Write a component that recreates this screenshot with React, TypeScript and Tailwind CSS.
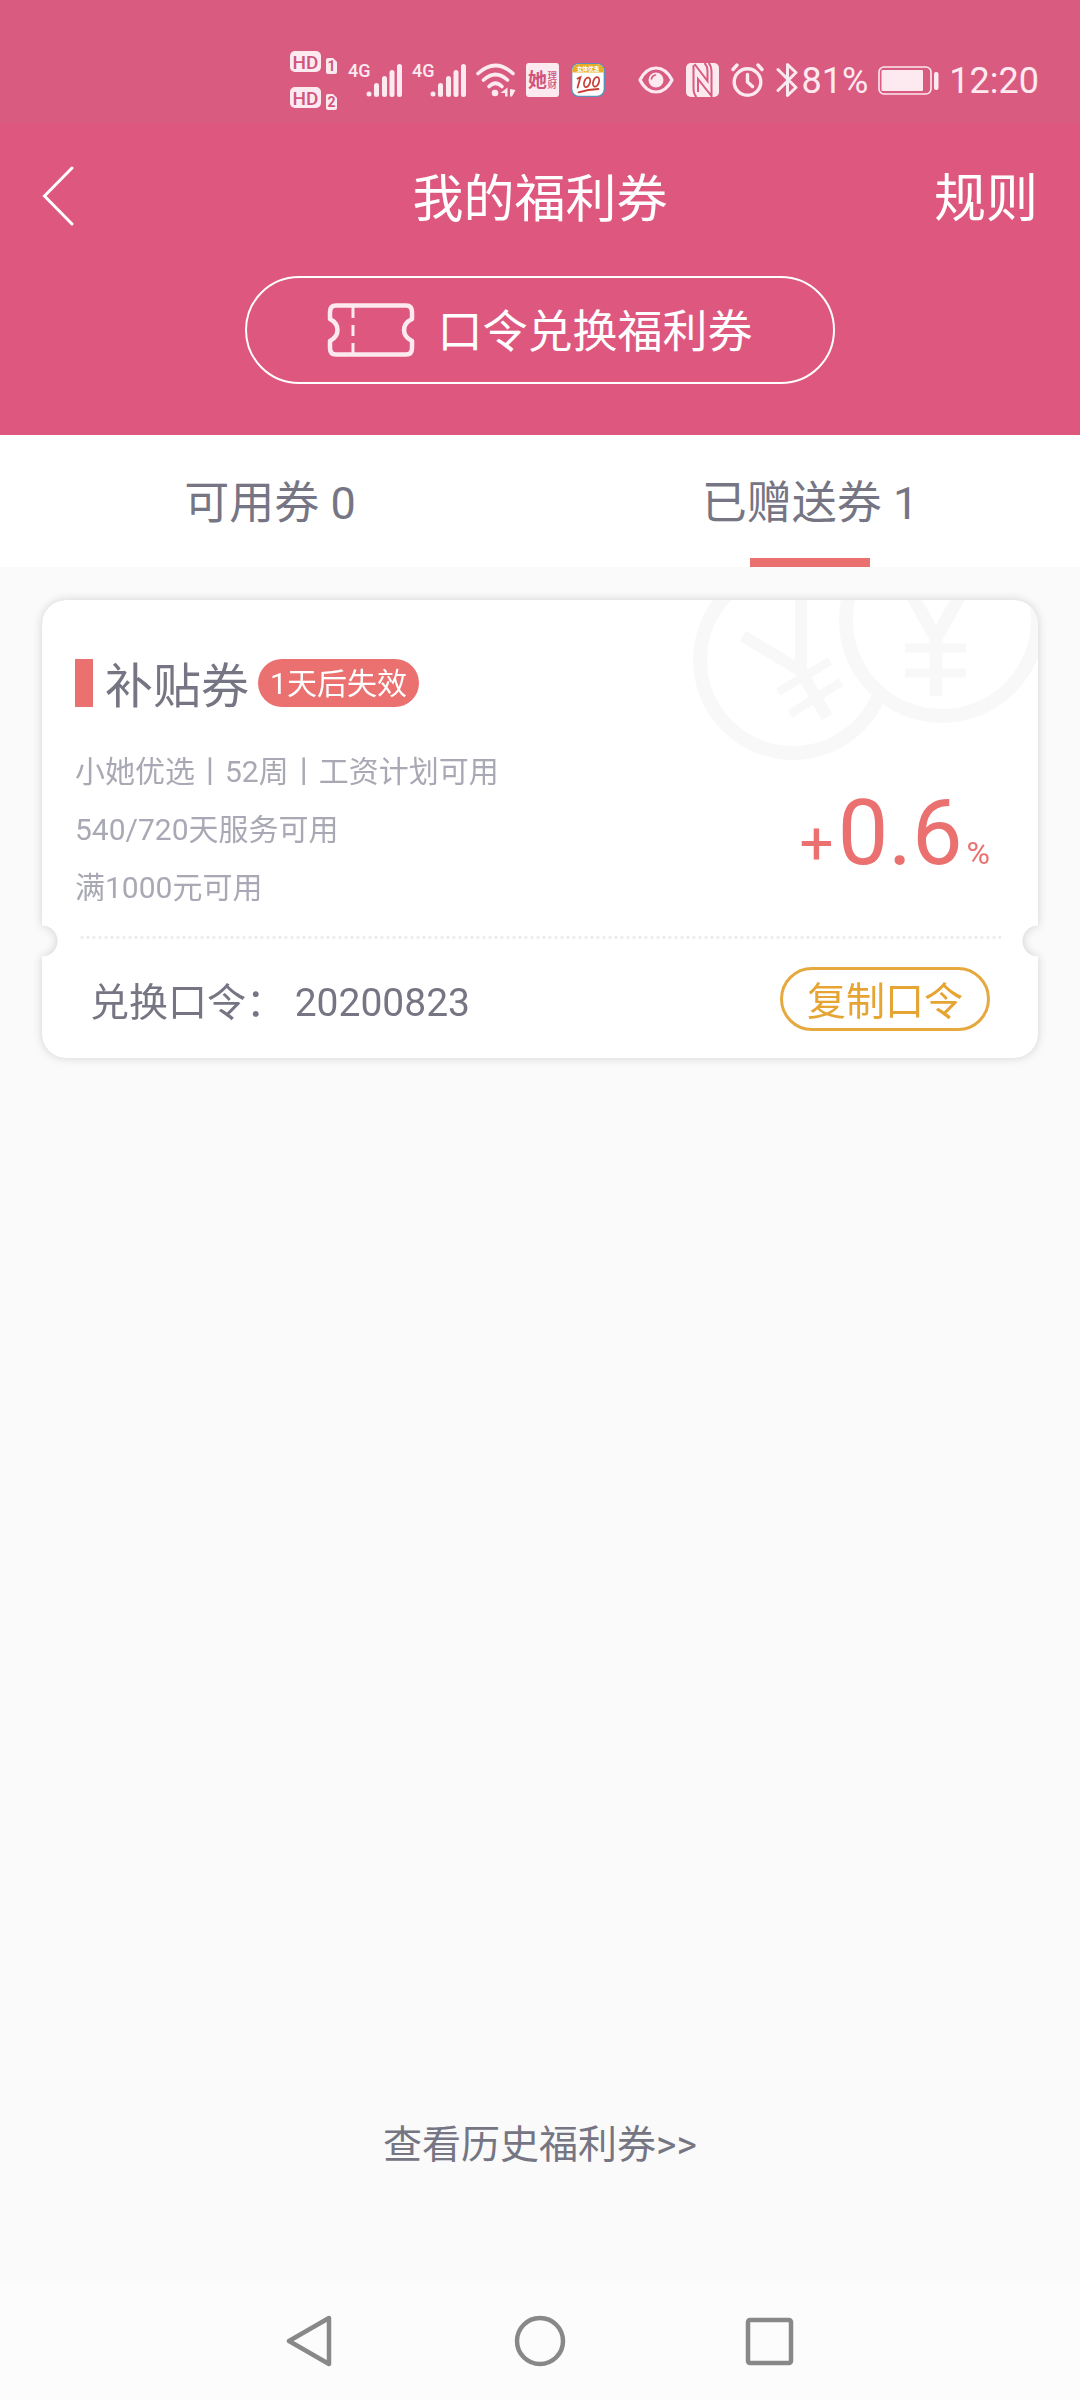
import React from "react";

function HdBadge({ sim }: { sim: string }) {
  return (
    <svg width="48" height="23" viewBox="0 0 48 23">
      <rect x="0" y="0" width="31" height="21" rx="5" fill="#fdeaf1" />
      <text x="15.5" y="17.5" textAnchor="middle" fontSize="19" fontWeight="500" fill="#d0557c">HD</text>
      <path d="M36 9a2 2 0 0 1 2-2h5l4 4v10a2 2 0 0 1-2 2h-7a2 2 0 0 1-2-2z" fill="#fdeaf1" />
      <text x="41.5" y="20" textAnchor="middle" fontSize="14" fontWeight="700" fill="#d0557c">{sim}</text>
    </svg>
  );
}

function Signal() {
  return (
    <svg width="54" height="46" viewBox="0 -6 54 46" fill="#fdeaf1">
      <text x="0" y="14" fontSize="18" fontWeight="500">4G</text>
      <circle cx="21" cy="31" r="2.5" />
      <rect x="26" y="20" width="5" height="14" rx="2.5" />
      <rect x="34" y="13" width="5" height="21" rx="2.5" />
      <rect x="41.500" y="7" width="5" height="27" rx="2.5" />
      <rect x="49" y="1" width="5" height="33" rx="2.5" />
    </svg>
  );
}

function WifiIcon() {
  return (
    <svg width="40" height="34" viewBox="0 0 40 34" fill="none" stroke="#fdeaf1" strokeWidth="3.6" strokeLinecap="round">
      <path d="M2 10.500Q19.500-5.500 37 10.500" />
      <path d="M7.500 17Q19.500 6 31.500 17" />
      <path d="M13 23.500Q19.500 17 26 23.500" />
      <circle cx="19" cy="30" r="3.3" fill="#fdeaf1" stroke="none" />
      <path d="M31.500 24.500v9H29v-3.500h-4.500zM34 26l5.500 1-3.500 6.500H34z" fill="#fdeaf1" stroke="none" />
    </svg>
  );
}

function SheApp() {
  return (
    <svg width="34" height="34" viewBox="0 0 34 34">
      <rect x="0" y="0" width="33" height="34" rx="3" fill="#fdeaf1" />
      <g fill="#d0557c">
        <text x="2" y="24" fontSize="19" fontWeight="700">她</text>
        <text x="21.500" y="15.500" fontSize="9.500" fontWeight="500">理</text>
        <text x="21.500" y="25" fontSize="9.500" fontWeight="500">财</text>
      </g>
    </svg>
  );
}

function HundredApp() {
  return (
    <svg width="36" height="38" viewBox="0 0 38 38">
      <rect x="1" y="1" width="36" height="36" rx="8" fill="#5b92bd" />
      <rect x="2.500" y="2" width="33" height="33.500" rx="7" fill="#fff" />
      <path d="M2.500 11V9a7 7 0 0 1 7-7h19a7 7 0 0 1 7 7v2z" fill="#e8ad25" />
      <text x="19" y="9" textAnchor="middle" fontSize="6" fontWeight="700" fill="#fff">女体优惠</text>
      <g fill="none" stroke="#ca3f35" strokeWidth="1.900" strokeLinecap="round">
        <path d="M8 17.500l3-1.500-3 11M9 32q10-3 21-3.500" />
        <ellipse cx="18" cy="21.500" rx="3" ry="5.200" transform="rotate(18 18 21.500)" />
        <ellipse cx="27.500" cy="21" rx="3" ry="5.200" transform="rotate(18 27.500 21)" />
      </g>
    </svg>
  );
}

function EyeIcon() {
  return (
    <svg width="36" height="28" viewBox="0 0 36 28">
      <path d="M2 14Q8 2 18 2t16 12Q28 26 18 26T2 14z" fill="none" stroke="#fdeaf1" strokeWidth="3.200" strokeLinejoin="round" />
      <circle cx="18" cy="14" r="7.500" fill="#fdeaf1" />
      <path d="M13.500 13q.5-3.500 4-4" fill="none" stroke="#d95b80" strokeWidth="1.600" strokeLinecap="round" />
    </svg>
  );
}

function NfcIcon() {
  return (
    <svg width="33" height="34" viewBox="0 0 33 34">
      <rect width="33" height="34" rx="5" fill="#fdeaf1" />
      <g fill="none" stroke="#d95b80" strokeWidth="2">
        <path d="M7.500 2V25Q7.500 31 10.500 34" />
        <path d="M8.500 1L21.500 18V8Q21.500 3 18.500 0" />
        <path d="M12 29V16L25.500 33V9Q25.500 3 22.500 0" />
      </g>
    </svg>
  );
}

function AlarmIcon() {
  return (
    <svg width="33" height="34" viewBox="0 0 33 34" fill="none" stroke="#fdeaf1" strokeWidth="3.400" strokeLinecap="round">
      <circle cx="16.500" cy="19" r="13.300" />
      <path d="M16.500 11.500V19l5 4.500M2 6.500l4-4.500M31 6.500L27 2" />
    </svg>
  );
}

function BluetoothIcon() {
  return (
    <svg width="22" height="36" viewBox="0 0 22 36" fill="none" stroke="#fdeaf1" strokeWidth="3" strokeLinecap="round" strokeLinejoin="round">
      <path d="M2 7.500l18 18-8.500 8V2.500L20 10.500l-18 18" />
    </svg>
  );
}

function BatteryIcon() {
  return (
    <svg width="61" height="29" viewBox="0 0 61 29">
      <rect x="1" y="1" width="52" height="27" rx="5" fill="none" stroke="#fdeaf1" strokeWidth="1.600" />
      <rect x="3.500" y="4" width="41.500" height="21" rx="1" fill="#fdeaf1" />
      <rect x="56" y="6" width="4.500" height="18" rx="2" fill="#fdeaf1" />
    </svg>
  );
}

function StatusBar() {
  return (
    <div className="flex h-[123px] items-center justify-end bg-[#d95b80] pt-[37px] pr-[41px] text-[36px] leading-none text-[#fdeaf1]">
      <div className="flex items-center gap-[10px]">
        <div className="flex flex-col gap-[13px]">
          <HdBadge sim="1" />
          <HdBadge sim="2" />
        </div>
        <Signal />
        <Signal />
        <WifiIcon />
        <SheApp />
        <HundredApp />
      </div>
      <div className="ml-8 flex items-center gap-3">
        <EyeIcon />
        <NfcIcon />
        <AlarmIcon />
        <BluetoothIcon />
      </div>
      <span className="ml-1 pt-0.5">81%</span>
      <span className="ml-[10px]"><BatteryIcon /></span>
      <span className="ml-[10px] pt-0.5">12:20</span>
    </div>
  );
}

function Header() {
  return (
    <header className="flex flex-col items-center bg-[#de577f] pb-[51px] text-white">
      <div className="grid h-[153px] w-full grid-cols-3 items-center px-[42px] pb-1 text-[51px] leading-none">
        <button type="button" aria-label="返回" className="justify-self-start pb-1">
          <svg width="32" height="60" viewBox="0 0 32 60" fill="none" stroke="#fff" strokeWidth="3" strokeLinecap="round">
            <path d="M30 2L2.500 30 30 58" />
          </svg>
        </button>
        <h1 className="justify-self-center pt-1 whitespace-nowrap">我的福利券</h1>
        <button type="button" className="justify-self-end pt-1 text-[52px]">规则</button>
      </div>
      <button type="button" className="flex h-[108px] items-center gap-[22px] rounded-full border-2 border-white px-20 text-[45px] leading-none">
        <svg width="88" height="54" viewBox="0 0 88 54" fill="none" stroke="#fdeaf1" strokeWidth="4.500" strokeLinejoin="round">
          <path d="M9 2.500H79Q85 2.500 85 9V16Q77 20 77 27T85 38V45Q85 51.500 79 51.500H9Q3 51.500 3 45V38Q10.500 34 10.500 27T3 16V9Q3 2.500 9 2.500Z" />
          <path d="M26 4V15M26 22V33M26 40V51" strokeWidth="3" />
        </svg>
        <span className="pt-1">口令兑换福利券</span>
      </button>
    </header>
  );
}

function Tabs() {
  return (
    <nav className="grid h-[132px] grid-cols-2 bg-white text-[45px] text-[#767583]">
      <button type="button" className="flex flex-col items-center justify-between">
        <span className="pt-9 leading-[66px]">可用券 0</span>
      </button>
      <button type="button" className="flex flex-col items-center justify-between">
        <span className="pt-9 leading-[66px]">已赠送券 1</span>
        <span className="h-[9px] w-[120px] bg-[#ea7170]" />
      </button>
    </nav>
  );
}

function Coins() {
  return (
    <svg className="absolute top-0 right-0" width="360" height="180" viewBox="678 600 360 180" fill="none" stroke="#f8f8f8">
      <circle cx="793" cy="660" r="93" strokeWidth="14" />
      <path d="M743 636L801 671L827 717M801 600V671" strokeWidth="12" />
      <path d="M778 692L830 661M790 714L841 682" strokeWidth="9" />
      <circle cx="942" cy="620" r="96" strokeWidth="14" fill="#fff" />
      <path d="M909 590L936 638L963 590M936 638V696" strokeWidth="13" />
      <path d="M905 648H966M905 673H966" strokeWidth="9" />
    </svg>
  );
}

function Coupon() {
  return (
    <section className="drop-shadow-[0_0_5px_rgba(0,0,0,0.16)]">
      <div className="relative overflow-hidden rounded-3xl bg-white [mask-composite:intersect] [mask-image:radial-gradient(circle_at_0_calc(100%_-_117px),transparent_15px,black_16px),radial-gradient(circle_at_100%_calc(100%_-_117px),transparent_15px,black_16px)]">
        <Coins />
        <div className="relative px-[33px] pt-[59px]">
          <div className="flex h-12 items-center">
            <span className="h-12 w-[18px] bg-[#ea7170]" />
            <h2 className="ml-3 pt-2 text-[48px] leading-none text-[#767583]">补贴券</h2>
            <span className="ml-[9px] flex h-12 items-center rounded-full bg-[#ea7170] px-3 pt-0.5 text-[30px] leading-none text-white">1天后失效</span>
          </div>
          <div className="flex items-end justify-between">
            <div className="pt-9 text-[30px] leading-[58px] text-[#a9a9b5]">
              <p>小她优选丨52周丨工资计划可用</p>
              <p>540/720天服务可用</p>
              <p>满1000元可用</p>
            </div>
            <p className="mr-[15px] flex items-baseline pb-[38px] font-[Roboto] leading-none text-[#ea7170]">
              <span className="mr-1 text-[60px]">+</span>
              <span className="text-[90px]">0.6</span>
              <span className="ml-1 text-[32px]">%</span>
            </p>
          </div>
        </div>
        <div className="mx-[37px] mt-[19px] h-[3px] bg-[radial-gradient(circle,#ebebeb_1px,transparent_2px)] bg-[length:6px_3px]" />
        <div className="flex items-center justify-between pt-7 pr-[48px] pb-[27px] pl-[48px] text-[39px] leading-none">
          <p className="pt-2 whitespace-pre text-[#767583]">兑换口令： 20200823</p>
          <button type="button" className="h-16 w-[210px] rounded-full border-3 border-[#e5a93f] pt-1.5 text-[#e6a433]">复制口令</button>
        </div>
      </div>
    </section>
  );
}

function NavBar() {
  return (
    <nav className="flex h-[119px] items-center justify-center gap-[178px] bg-[#fcfcfc]">
      <button type="button" aria-label="后退">
        <svg width="52" height="52" viewBox="0 0 52 52" fill="none" stroke="#888" strokeWidth="4.500" strokeLinejoin="round">
          <path d="M45 3V49L5 26Z" />
        </svg>
      </button>
      <button type="button" aria-label="主页">
        <svg width="52" height="52" viewBox="0 0 52 52" fill="none" stroke="#888" strokeWidth="4.500">
          <circle cx="26" cy="26" r="23" />
        </svg>
      </button>
      <button type="button" aria-label="最近任务">
        <svg width="52" height="52" viewBox="0 0 52 52" fill="none" stroke="#888" strokeWidth="4.500">
          <rect x="4" y="5" width="43" height="43" rx="2" />
        </svg>
      </button>
    </nav>
  );
}

export default function App() {
  return (
    <div className="flex min-h-screen flex-col bg-[#fafafa] font-['Roboto','Noto_Sans_CJK_SC',sans-serif]">
      <StatusBar />
      <Header />
      <Tabs />
      <main className="flex grow flex-col px-[42px] pt-[33px] pb-[107px]">
        <Coupon />
        <a href="#history" className="mt-auto self-center text-[39px] leading-[58px] text-[#767583]">查看历史福利券&gt;&gt;</a>
      </main>
      <NavBar />
    </div>
  );
}
